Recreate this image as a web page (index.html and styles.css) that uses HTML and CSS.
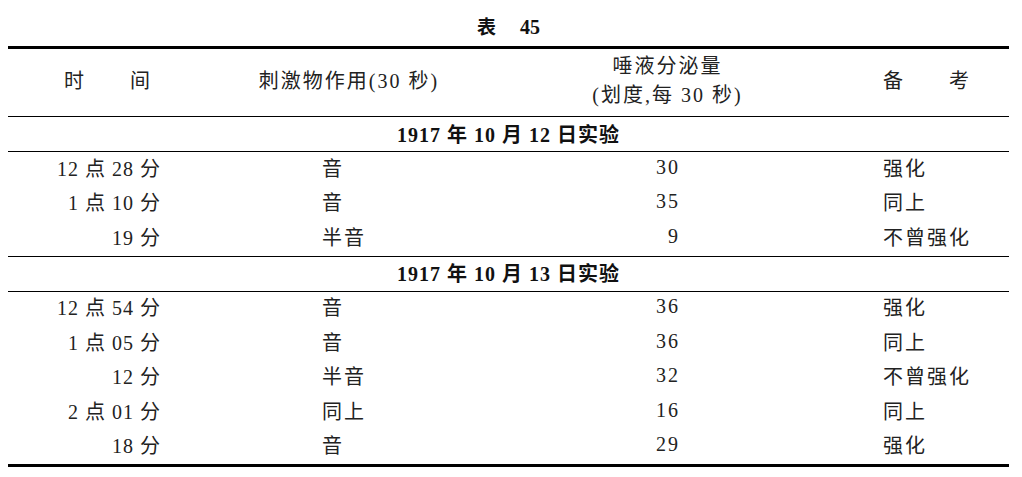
FILE: index.html
```html
<!DOCTYPE html>
<html lang="zh">
<head>
<meta charset="utf-8">
<link rel="stylesheet" href="styles.css">
</head>
<body>
<div class="title"><span class="title-cjk">表</span><span class="title-num">45</span></div>
<table class="data">
  <colgroup>
    <col class="c1"><col class="c2"><col class="c3"><col class="c4">
  </colgroup>
  <thead>
    <tr class="head">
      <th>时　　间</th>
      <th>刺激物作用(30 秒)</th>
      <th><div>唾液分泌量</div><div>(划度,每 30 秒)</div></th>
      <th>备　　考</th>
    </tr>
  </thead>
  <tbody>
    <tr class="section"><td colspan="4">1917 年 10 月 12 日实验</td></tr>
    <tr class="row"><td class="t">12 点 28 分</td><td class="s">音</td><td class="n">30</td><td class="r">强化</td></tr>
    <tr class="row"><td class="t">1 点 10 分</td><td class="s">音</td><td class="n">35</td><td class="r">同上</td></tr>
    <tr class="row"><td class="t">19 分</td><td class="s">半音</td><td class="n">9</td><td class="r">不曾强化</td></tr>
    <tr class="section"><td colspan="4">1917 年 10 月 13 日实验</td></tr>
    <tr class="row"><td class="t">12 点 54 分</td><td class="s">音</td><td class="n">36</td><td class="r">强化</td></tr>
    <tr class="row"><td class="t">1 点 05 分</td><td class="s">音</td><td class="n">36</td><td class="r">同上</td></tr>
    <tr class="row"><td class="t">12 分</td><td class="s">半音</td><td class="n">32</td><td class="r">不曾强化</td></tr>
    <tr class="row"><td class="t">2 点 01 分</td><td class="s">同上</td><td class="n">16</td><td class="r">同上</td></tr>
    <tr class="row"><td class="t">18 分</td><td class="s">音</td><td class="n">29</td><td class="r">强化</td></tr>
  </tbody>
</table>
</body>
</html>
```

FILE: styles.css
```css
html, body {
  margin: 0;
  padding: 0;
  background: #ffffff;
}
body {
  padding: 8px 0 0 8px;
  font-family: "Liberation Serif", "Noto Sans CJK SC", serif;
  color: #222;
  font-size: 20px;
}
.title {
  width: 1001px;
  height: 38px;
  line-height: 38px;
  text-align: center;
  font-weight: bold;
  color: #111;
}
.title-cjk {
  font-size: 19px;
  margin-right: 24px;
}
.title-num {
  font-size: 20px;
}
.data {
  width: 1001px;
  border-collapse: collapse;
  table-layout: fixed;
  border-top: 3px solid #000;
  border-bottom: 3px solid #000;
}
.c1 { width: 200px; }
.c2 { width: 282px; }
.c3 { width: 355px; }
.c4 { width: 164px; }
.data th, .data td {
  padding: 0;
  font-weight: normal;
  white-space: nowrap;
}
.head th {
  height: 64px;
  padding-bottom: 3px;
  text-align: center;
  vertical-align: middle;
  letter-spacing: 2px;
  line-height: 29px;
  border-bottom: 1px solid #000;
}
.section td {
  height: 32px;
  padding-bottom: 2px;
  text-align: center;
  font-weight: bold;
  color: #111;
  letter-spacing: 1px;
  border-bottom: 1px solid #000;
  border-top: 1px solid #000;
}
.row td {
  height: 30.5px;
  padding-bottom: 4px;
  letter-spacing: 2px;
}
.row .t {
  text-align: right;
  padding-right: 47px;
  letter-spacing: 1px;
}
.row .s {
  text-align: left;
  padding-left: 114px;
}
.row .n {
  text-align: right;
  padding-right: 165px;
}
.row .r {
  text-align: left;
  padding-left: 38px;
}
```
